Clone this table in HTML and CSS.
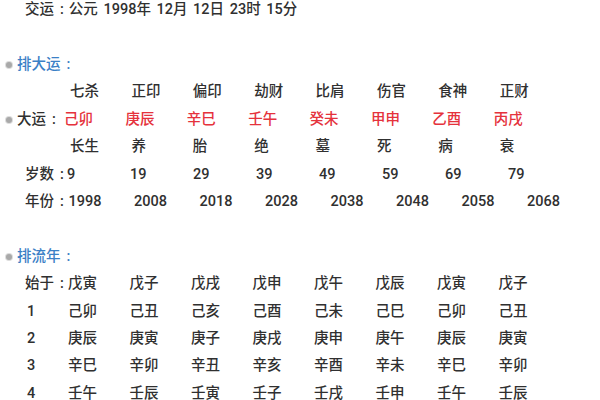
FILE: index.html
```html
<!DOCTYPE html>
<html lang="zh-CN">
<head>
<meta charset="utf-8">
<title>排大运</title>
<link rel="stylesheet" href="styles.css">
</head>
<body>
<div class="page">
  <div class="row jiaoyun">交运<span class="c">:</span>公元 1998年 12月 12日 23时 15分</div>
  <div class="row blank"></div>
  <div class="row head"><span class="dot"></span><span class="title">排大运<span class="c">:</span></span></div>
  <div class="row cols gods">
    <span>七杀</span><span>正印</span><span>偏印</span><span>劫财</span><span>比肩</span><span>伤官</span><span>食神</span><span>正财</span>
  </div>
  <div class="row cols dayun">
    <span class="dot"></span><span class="lab">大运<span class="c">:</span></span>
    <span class="red">己卯</span><span class="red">庚辰</span><span class="red">辛巳</span><span class="red">壬午</span><span class="red">癸未</span><span class="red">甲申</span><span class="red">乙酉</span><span class="red">丙戌</span>
  </div>
  <div class="row cols gods">
    <span>长生</span><span>养</span><span>胎</span><span>绝</span><span>墓</span><span>死</span><span>病</span><span>衰</span>
  </div>
  <div class="row cols age">
    <span class="lab">岁数<span class="c">:</span></span>
    <span>9</span><span>19</span><span>29</span><span>39</span><span>49</span><span>59</span><span>69</span><span>79</span>
  </div>
  <div class="row cols year">
    <span class="lab">年份<span class="c">:</span></span>
    <span>1998</span><span>2008</span><span>2018</span><span>2028</span><span>2038</span><span>2048</span><span>2058</span><span>2068</span>
  </div>
  <div class="row blank"></div>
  <div class="row head"><span class="dot"></span><span class="title">排流年<span class="c">:</span></span></div>
  <div class="row cols liu start">
    <span class="lab">始于<span class="c">:</span></span>
    <span>戊寅</span><span>戊子</span><span>戊戌</span><span>戊申</span><span>戊午</span><span>戊辰</span><span>戊寅</span><span>戊子</span>
  </div>
  <div class="row cols liu num">
    <span class="lab">1</span>
    <span>己卯</span><span>己丑</span><span>己亥</span><span>己酉</span><span>己未</span><span>己巳</span><span>己卯</span><span>己丑</span>
  </div>
  <div class="row cols liu num">
    <span class="lab">2</span>
    <span>庚辰</span><span>庚寅</span><span>庚子</span><span>庚戌</span><span>庚申</span><span>庚午</span><span>庚辰</span><span>庚寅</span>
  </div>
  <div class="row cols liu num">
    <span class="lab">3</span>
    <span>辛巳</span><span>辛卯</span><span>辛丑</span><span>辛亥</span><span>辛酉</span><span>辛未</span><span>辛巳</span><span>辛卯</span>
  </div>
  <div class="row cols liu num">
    <span class="lab">4</span>
    <span>壬午</span><span>壬辰</span><span>壬寅</span><span>壬子</span><span>壬戌</span><span>壬申</span><span>壬午</span><span>壬辰</span>
  </div>
</div>
</body>
</html>
```

FILE: styles.css
```css
html, body {
  margin: 0;
  padding: 0;
  background: #ffffff;
  overflow: hidden;
}
body {
  font-family: "Roboto", "Noto Sans CJK SC", sans-serif;
  font-size: 14.5px;
  font-weight: 500;
  color: #303030;
}
.page {
  margin-top: -3.7px;
}
.row {
  height: 27.4px;
  line-height: 27.4px;
  display: flex;
  align-items: center;
  white-space: nowrap;
}
.c {
  display: inline-block;
  margin: 0 5px 0 6px;
}
.jiaoyun {
  padding-left: 25px;
  word-spacing: 2px;
}
.head {
  padding-left: 6px;
}
.dot {
  flex: 0 0 auto;
  width: 6px;
  height: 6px;
  border-radius: 50%;
  background: #a9a9a9;
  box-shadow: 0 0 0 1px #dcdcdc;
  margin-right: 5px;
}
.title {
  color: #3b80c6;
}
.cols > span {
  flex: 0 0 auto;
}
.gods {
  padding-left: 70px;
}
.gods > span {
  width: 61.4px;
}
.dayun {
  padding-left: 6px;
}
.dayun .lab {
  width: 47px;
}
.dayun .red {
  width: 61.4px;
  color: #e5323c;
}
.age, .year, .start {
  padding-left: 25px;
}
.cols .lab {
  flex: 0 0 auto;
}
.age .lab {
  width: 42px;
}
.year .lab {
  width: 43.5px;
}
.age .lab .c, .year .lab .c, .dayun .lab .c, .start .lab .c {
  margin: 0 0 0 6px;
}
.age > span:not(.lab) {
  width: 63px;
}
.year > span:not(.lab) {
  width: 65.5px;
}
.start .lab {
  width: 43px;
}
.num {
  padding-left: 27px;
}
.num .lab {
  width: 41px;
}
.liu > span:not(.lab) {
  width: 61.5px;
}
```
